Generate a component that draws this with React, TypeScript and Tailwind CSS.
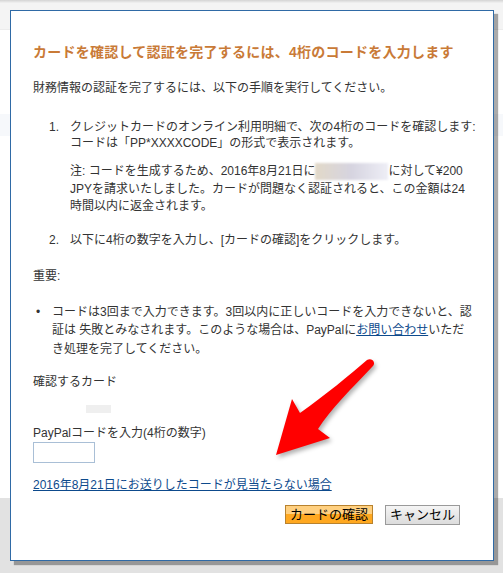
import React from "react";

const ARROW =
  "M367 360 C372 357 377 363 372 367 C352 388 330 410 318 429 L330 438 L276 455 L292 399 L300 413 C325 395 350 375 367 360 Z";

function App() {
  return (
    <div className="relative w-[503px] h-[573px] overflow-hidden bg-white font-['Liberation_Sans','Noto_Sans_CJK_JP',sans-serif] text-[12px] text-[#333]">
      {/* page behind the dialog */}
      <div className="h-[3px] bg-gradient-to-b from-[#d4d4d4] to-[#f2f2f2]"></div>
      <div className="h-[27px] bg-[#f4f4f4] border-b border-[#ececec]"></div>
      <div className="h-[84px]"></div>
      <div className="h-[22px] bg-[#f6f8fb]"></div>
      <div className="h-[362px]"></div>
      <div className="h-[75px] bg-[#e2e2e2]"></div>

      {/* dialog */}
      <div className="absolute left-[10px] top-[10px] w-[484px] h-[551px] bg-white border border-[#2f6aa6] shadow-[4px_4px_1px_rgba(0,0,0,0.33)] pl-[22px] pr-[10px] pt-[31px]">
        <h2 className="text-[14px] leading-[20px] font-bold tracking-[0.25px] text-[#c97a37] whitespace-nowrap">
          カードを確認して認証を完了するには、4桁のコードを入力します
        </h2>

        <p className="mt-[17px] leading-[18px] whitespace-nowrap">
          財務情報の認証を完了するには、以下の手順を実行してください。
        </p>

        <div className="mt-[22px] grid grid-cols-[37px_1fr] whitespace-nowrap">
          <span className="leading-[16px] text-right pr-[11px]">1.</span>
          <div>
            <p className="leading-[16px]">
              クレジットカードのオンライン利用明細で、次の4桁のコードを確認します:
              <br />
              コードは「PP*XXXXCODE」の形式で表示されます。
            </p>
            <p className="mt-[12px] leading-[17.5px]">
              注: コードを生成するため、2016年8月21日に
              <span className="inline-block align-middle w-[73px] h-[17px] bg-gradient-to-r from-[#e2d9c8] via-[#d6d4e0] to-[#eeeef6] blur-[1px]"></span>
              に対して¥200
              <br />
              JPYを請求いたしました。カードが問題なく認証されると、この金額は24
              <br />
              時間以内に返金されます。
            </p>
          </div>
          <span className="mt-[15px] leading-[18px] text-right pr-[11px]">2.</span>
          <p className="mt-[15px] leading-[18px]">
            以下に4桁の数字を入力し、[カードの確認]をクリックします。
          </p>
        </div>

        <p className="mt-[18px] leading-[18px]">重要:</p>

        <div className="mt-[18px] grid grid-cols-[19px_1fr] whitespace-nowrap leading-[18.5px]">
          <span className="pl-[3px]">•</span>
          <p>
            コードは3回まで入力できます。3回以内に正しいコードを入力できないと、認
            <br />
            証は 失敗とみなされます。このような場合は、PayPalに
            <a href="#" className="text-[#0d4a8c] underline">お問い合わせ</a>
            いただ
            <br />
            き処理を完了してください。
          </p>
        </div>

        <p className="mt-[15px] leading-[18px]">確認するカード</p>
        <div className="mt-[14px] ml-[53px] w-[25px] h-[8px] bg-[#efefef]"></div>

        <p className="mt-[11px] leading-[18px]">PayPalコードを入力(4桁の数字)</p>
        <input
          type="text"
          className="block w-[62px] h-[21px] border border-[#a9bfd6] bg-white outline-none"
        />

        <a href="#" className="block mt-[13px] leading-[18px] text-[#0d4a8c] underline whitespace-nowrap">
          2016年8月21日にお送りしたコードが見当たらない場合
        </a>

        <div className="mt-[11px] flex justify-end gap-[12px] pr-[23px]">
          <button className="w-[88px] h-[19px] border border-[#b8822e] bg-gradient-to-b from-[#ffd080] from-50% to-[#ffa820] to-50% text-[13px] leading-[17px] text-black">
            カードの確認
          </button>
          <button className="w-[75px] h-[20px] border border-[#9a9a9a] bg-gradient-to-b from-[#f5f5f5] to-[#dcdcdc] text-[13px] leading-[18px] text-black">
            キャンセル
          </button>
        </div>
      </div>

      {/* red annotation arrow */}
      <svg className="absolute inset-0 pointer-events-none" width="503" height="573" viewBox="0 0 503 573">
        <defs>
          <filter id="sh" x="-20%" y="-20%" width="140%" height="140%">
            <feGaussianBlur stdDeviation="2" />
          </filter>
        </defs>
        <path d={ARROW} transform="translate(2 3)" fill="rgba(0,0,0,0.3)" filter="url(#sh)" />
        <path d={ARROW} fill="#ff0000" />
      </svg>
    </div>
  );
}

export default App;
